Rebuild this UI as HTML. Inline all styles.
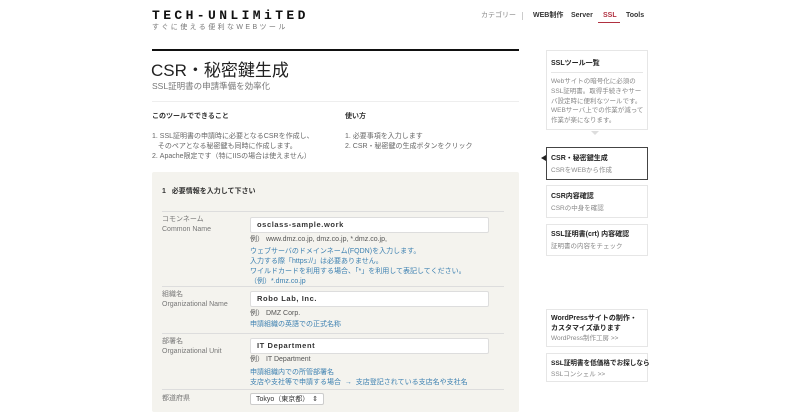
<!DOCTYPE html>
<html><head><meta charset="utf-8">
<style>
*{margin:0;padding:0;box-sizing:border-box}
body{width:800px;height:402px;overflow:hidden;background:#fff;font-family:"Liberation Sans","Noto Sans CJK JP",sans-serif;color:#333;position:relative;line-height:1.2}
.a{position:absolute;white-space:nowrap}
.logo{left:152px;top:9px;font-family:"Liberation Mono",monospace;font-weight:bold;font-size:13px;letter-spacing:3.4px;color:#111;line-height:13px}
.tag{left:152px;top:24px;font-size:7px;letter-spacing:2.4px;color:#777;line-height:8px}
.nav{top:12px;font-size:7px;color:#333;font-weight:bold;line-height:8px}
.s7{font-size:7px}
.blue{color:#3a7fb0}
.box{position:absolute;left:546px;width:102px;background:#fff;border:1px solid #e6e6e6}
.bt{position:absolute;left:4px;font-size:7px;font-weight:bold;color:#222;white-space:nowrap;line-height:9px}
.bs{position:absolute;left:4px;font-size:6.5px;color:#888;white-space:nowrap;line-height:8px}
.inp{position:absolute;left:250px;width:239px;height:16px;background:#fff;border:1px solid #ddd;border-radius:2px;font-size:7.5px;font-weight:bold;padding:0 0 0 6px;line-height:14px;letter-spacing:.6px;color:#333}
.hr{position:absolute;left:162px;width:342px;height:1px;background:#ddd}
.lab{position:absolute;left:162px;font-size:7px;color:#777;line-height:10px}
</style></head><body>
<div class="a logo">TECH-UNLIMiTED</div>
<div class="a tag">すぐに使える便利なWEBツール</div>
<div class="a nav" style="left:481px;font-weight:normal;color:#888">カテゴリー</div>
<div class="a" style="left:522px;top:12px;width:1px;height:8px;background:#ccc"></div>
<div class="a nav" style="left:533px">WEB制作</div>
<div class="a nav" style="left:571px">Server</div>
<div class="a nav" style="left:603px;color:#b03040">SSL</div>
<div class="a" style="left:598px;top:22px;width:22px;height:1px;background:#b03040"></div>
<div class="a nav" style="left:626px">Tools</div>

<div class="a" style="left:152px;top:49px;width:367px;height:2px;background:#111"></div>
<div class="a" style="left:151px;top:62px;font-size:17px;color:#222;line-height:18px">CSR・秘密鍵生成</div>
<div class="a" style="left:152px;top:81px;font-size:8.5px;color:#777;line-height:10px">SSL証明書の申請準備を効率化</div>
<div class="a" style="left:152px;top:101px;width:367px;height:1px;background:#eee"></div>
<div class="a s7" style="left:152px;top:113px;font-weight:bold">このツールでできること</div>
<div class="a s7" style="left:152px;top:132px;color:#666;line-height:10px">1. SSL証明書の申請時に必要となるCSRを作成し、<br>&nbsp;&nbsp;&nbsp;そのペアとなる秘密鍵も同時に作成します。<br>2. Apache限定です（特にIISの場合は使えません）</div>
<div class="a s7" style="left:345px;top:113px;font-weight:bold">使い方</div>
<div class="a s7" style="left:345px;top:132px;color:#666;line-height:10px">1. 必要事項を入力します<br>2. CSR・秘密鍵の生成ボタンをクリック</div>

<div class="a" style="left:152px;top:172px;width:367px;height:240px;background:#f4f3ee;border-radius:2px"></div>
<div class="a s7" style="left:162px;top:188px;font-weight:bold;color:#333">1&nbsp;&nbsp;&nbsp;必要情報を入力して下さい</div>
<div class="hr" style="top:211px"></div>
<div class="lab" style="top:215px">コモンネーム<br>Common Name</div>
<div class="inp" style="top:217px">osclass-sample.work</div>
<div class="a s7" style="left:250px;top:236px;color:#555">例）&nbsp;www.dmz.co.jp, dmz.co.jp, *.dmz.co.jp,</div>
<div class="a s7 blue" style="left:250px;top:247px;line-height:10px">ウェブサーバのドメインネーム(FQDN)を入力します。<br>入力する際「https://」は必要ありません。<br>ワイルドカードを利用する場合、「*」を利用して表記してください。<br>（例）*.dmz.co.jp</div>
<div class="hr" style="top:286px"></div>
<div class="lab" style="top:290px">組織名<br>Organizational Name</div>
<div class="inp" style="top:291px">Robo Lab, Inc.</div>
<div class="a s7" style="left:250px;top:310px;color:#555">例）&nbsp;DMZ Corp.</div>
<div class="a s7 blue" style="left:250px;top:321px">申請組織の英語での正式名称</div>
<div class="hr" style="top:333px"></div>
<div class="lab" style="top:337px">部署名<br>Organizational Unit</div>
<div class="inp" style="top:338px">IT Department</div>
<div class="a s7" style="left:250px;top:356px;color:#555">例）&nbsp;IT Department</div>
<div class="a s7 blue" style="left:250px;top:368px;line-height:10px">申請組織内での所管部署名<br>支店や支社等で申請する場合&nbsp;&nbsp;→&nbsp;&nbsp;支店登記されている支店名や支社名</div>
<div class="hr" style="top:389px"></div>
<div class="lab" style="top:394px">都道府県</div>
<div class="a" style="left:250px;top:393px;width:74px;height:12px;background:#fff;border:1px solid #ccc;border-radius:2px;font-size:7px;padding:1px 0 0 5px;line-height:9px">Tokyo（東京都）<span style="position:absolute;right:5px">⇕</span></div>

<div class="box" style="top:50px;height:80px">
<div class="bt" style="top:8px">SSLツール一覧</div>
<div style="position:absolute;left:4px;top:21px;width:92px;height:1px;background:#e6e6e6"></div>
<div class="bs" style="top:26px;line-height:9.8px;color:#888">Webサイトの暗号化に必須の<br>SSL証明書。取得手続きやサー<br>バ設定時に便利なツールです。<br>WEBサーバ上での作業が減って<br>作業が楽になります。</div>
</div>
<div class="a" style="left:591px;top:131px;border-left:4px solid transparent;border-right:4px solid transparent;border-top:4px solid #ddd"></div>
<div class="a" style="left:541px;top:155px;border-top:3.5px solid transparent;border-bottom:3.5px solid transparent;border-right:5px solid #222"></div>
<div class="box" style="top:147px;height:33px;border:1px solid #444">
<div class="bt" style="top:6px">CSR・秘密鍵生成</div><div class="bs" style="top:19px">CSRをWEBから作成</div></div>
<div class="box" style="top:185px;height:33px">
<div class="bt" style="top:6px">CSR内容確認</div><div class="bs" style="top:19px">CSRの中身を確認</div></div>
<div class="box" style="top:224px;height:32px">
<div class="bt" style="top:5px">SSL証明書(crt) 内容確認</div><div class="bs" style="top:18px">証明書の内容をチェック</div></div>
<div class="box" style="top:309px;height:38px">
<div class="bt" style="top:4px;line-height:10px">WordPressサイトの制作・<br>カスタマイズ承ります</div><div class="bs" style="top:25px">WordPress制作工房 &gt;&gt;</div></div>
<div class="box" style="top:353px;height:29px">
<div class="bt" style="top:5px;font-size:6.6px">SSL証明書を低価格でお探しなら</div><div class="bs" style="top:17px">SSLコンシェル &gt;&gt;</div></div>
</body></html>
